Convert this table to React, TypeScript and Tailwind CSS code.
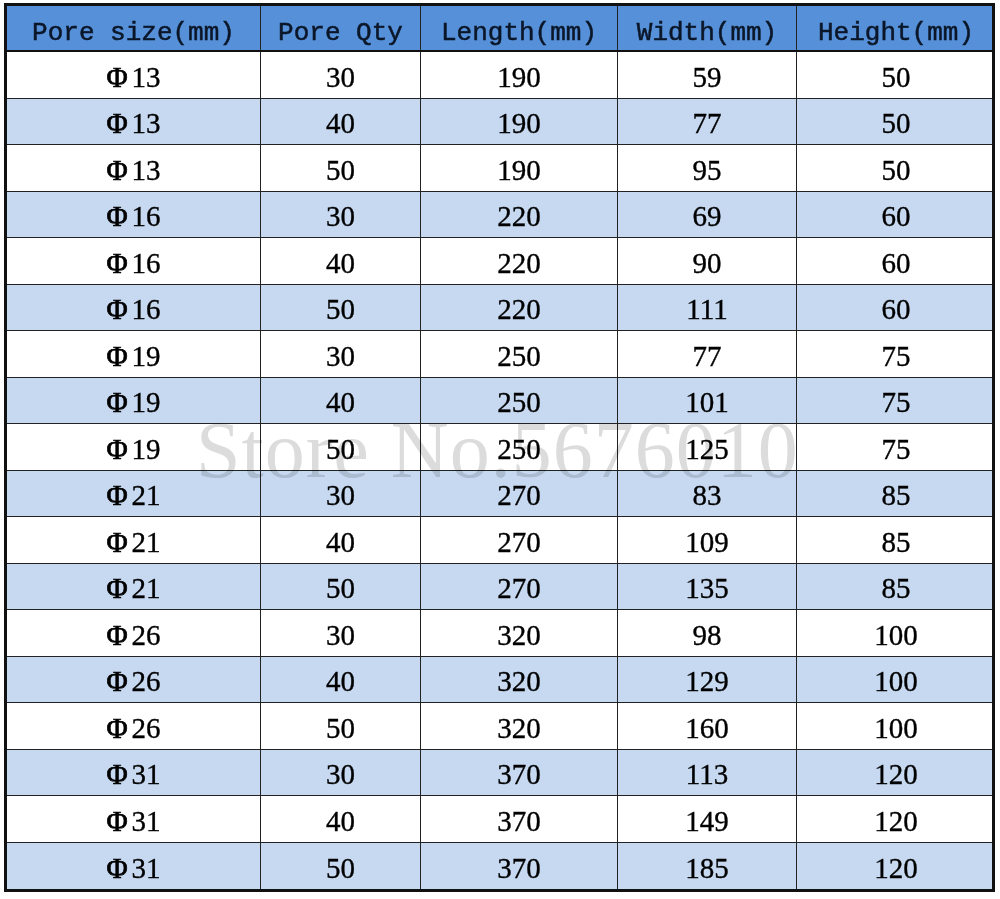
const headers = ['Pore size(mm)', 'Pore Qty', 'Length(mm)', 'Width(mm)', 'Height(mm)']

const rows: [number, number, number, number, number][] = [
  [13, 30, 190, 59, 50],
  [13, 40, 190, 77, 50],
  [13, 50, 190, 95, 50],
  [16, 30, 220, 69, 60],
  [16, 40, 220, 90, 60],
  [16, 50, 220, 111, 60],
  [19, 30, 250, 77, 75],
  [19, 40, 250, 101, 75],
  [19, 50, 250, 125, 75],
  [21, 30, 270, 83, 85],
  [21, 40, 270, 109, 85],
  [21, 50, 270, 135, 85],
  [26, 30, 320, 98, 100],
  [26, 40, 320, 129, 100],
  [26, 50, 320, 160, 100],
  [31, 30, 370, 113, 120],
  [31, 40, 370, 149, 120],
  [31, 50, 370, 185, 120],
]

const cols = 'grid grid-cols-[254px_160px_197px_179px_198px]'

export default function App() {
  return (
    <div className="relative w-[1000px] h-[899px] bg-white overflow-hidden">
      <div className="ml-[4px] mt-[3px] w-[991px] border-[3px] border-[#111]">
        <div className={`${cols} h-[46px] bg-[#5590d8] border-b-2 border-[#111]`}>
          {headers.map((h, i) => (
            <div
              key={h}
              className={`flex items-center justify-center pt-[9px] text-[26px] leading-none text-[#0b1628] font-['Liberation_Mono',monospace] [-webkit-text-stroke:0.5px_#0b1628] ${i < 4 ? 'border-r border-[#222]' : ''}`}
            >
              {h}
            </div>
          ))}
        </div>
        {rows.map((r, ri) => (
          <div
            key={ri}
            className={`${cols} ${ri % 2 === 0 ? 'h-[47px]' : 'h-[46px]'} ${ri % 2 === 1 ? 'bg-[#c6d9f1]' : 'bg-white'} ${ri < rows.length - 1 ? 'border-b border-[#222]' : ''}`}
          >
            {r.map((v, ci) => (
              <div
                key={ci}
                className={`flex items-center justify-center pt-[4px] text-[29px] leading-none text-black font-['Liberation_Serif',serif] [-webkit-text-stroke:0.35px_#000] ${ci < 4 ? 'border-r border-[#222]' : ''}`}
              >
                {ci === 0 ? (
                  <span>
                    <span className="mr-[4px] [-webkit-text-stroke:0.7px_#000]">Φ</span>
                    {v}
                  </span>
                ) : (
                  v
                )}
              </div>
            ))}
          </div>
        ))}
      </div>
      <div className="absolute left-[196px] top-[410px] text-[80px] leading-none text-[#dcdcdc] mix-blend-multiply font-['Liberation_Serif',serif] pointer-events-none whitespace-nowrap tracking-[1px]">
        Store No.5676010
      </div>
    </div>
  )
}
